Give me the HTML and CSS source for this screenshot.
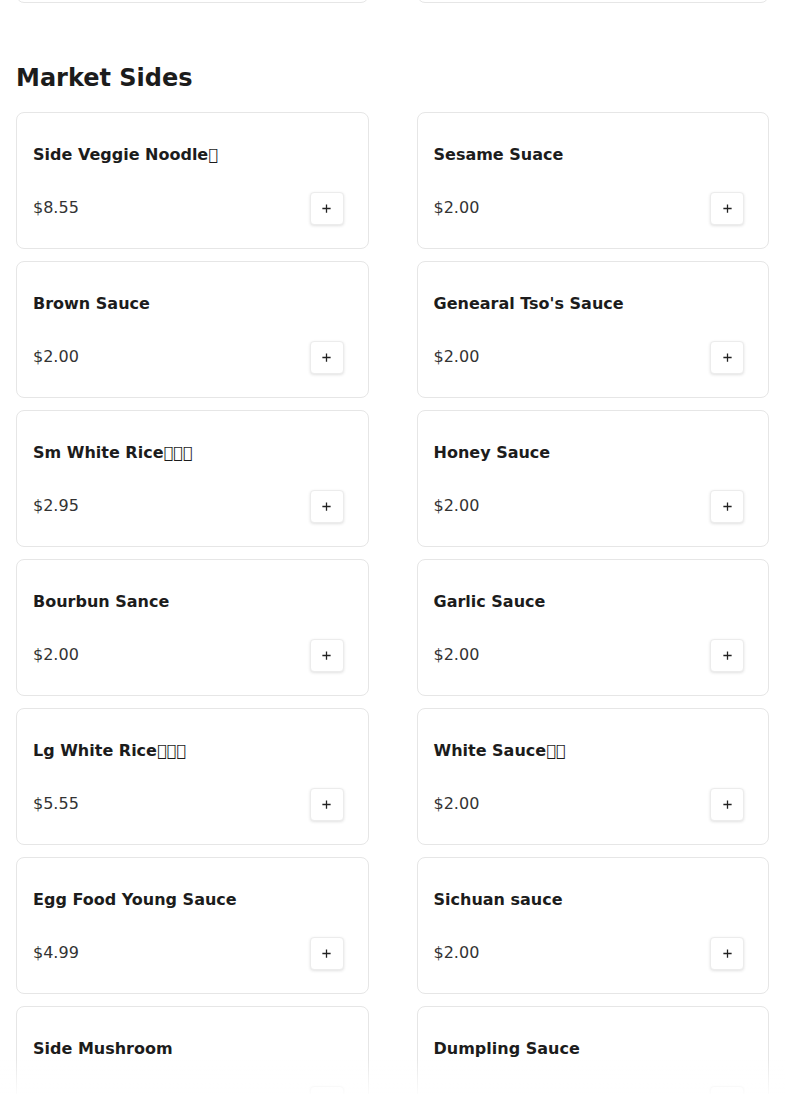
FILE: index.html
```html
<!DOCTYPE html>
<html lang="en">
<head>
<meta charset="utf-8">
<title>Market Sides</title>
<link rel="stylesheet" href="styles.css">
</head>
<body>
<main class="menu">
  <section class="section section-prev">
    <div class="grid">
      <div class="card card-empty"></div>
      <div class="card card-empty"></div>
    </div>
  </section>

  <section class="section">
    <h2 class="section-title">Market Sides</h2>
    <div class="grid">
      <div class="card"><h3 class="item-name">Side Veggie Noodle&#x10FFFD;</h3><div class="item-row"><span class="price">$8.55</span><button class="add" aria-label="Add"><svg viewBox="0 0 12 12" width="12" height="12"><path d="M6 1.5v9M1.5 6h9" stroke="#222" stroke-width="1.4" fill="none"/></svg></button></div></div>
      <div class="card"><h3 class="item-name">Sesame Suace</h3><div class="item-row"><span class="price">$2.00</span><button class="add" aria-label="Add"><svg viewBox="0 0 12 12" width="12" height="12"><path d="M6 1.5v9M1.5 6h9" stroke="#222" stroke-width="1.4" fill="none"/></svg></button></div></div>
      <div class="card"><h3 class="item-name">Brown Sauce</h3><div class="item-row"><span class="price">$2.00</span><button class="add" aria-label="Add"><svg viewBox="0 0 12 12" width="12" height="12"><path d="M6 1.5v9M1.5 6h9" stroke="#222" stroke-width="1.4" fill="none"/></svg></button></div></div>
      <div class="card"><h3 class="item-name">Genearal Tso's Sauce</h3><div class="item-row"><span class="price">$2.00</span><button class="add" aria-label="Add"><svg viewBox="0 0 12 12" width="12" height="12"><path d="M6 1.5v9M1.5 6h9" stroke="#222" stroke-width="1.4" fill="none"/></svg></button></div></div>
      <div class="card"><h3 class="item-name">Sm White Rice&#x10FFFD;&#x10FFFD;&#x10FFFD;</h3><div class="item-row"><span class="price">$2.95</span><button class="add" aria-label="Add"><svg viewBox="0 0 12 12" width="12" height="12"><path d="M6 1.5v9M1.5 6h9" stroke="#222" stroke-width="1.4" fill="none"/></svg></button></div></div>
      <div class="card"><h3 class="item-name">Honey Sauce</h3><div class="item-row"><span class="price">$2.00</span><button class="add" aria-label="Add"><svg viewBox="0 0 12 12" width="12" height="12"><path d="M6 1.5v9M1.5 6h9" stroke="#222" stroke-width="1.4" fill="none"/></svg></button></div></div>
      <div class="card"><h3 class="item-name">Bourbun Sance</h3><div class="item-row"><span class="price">$2.00</span><button class="add" aria-label="Add"><svg viewBox="0 0 12 12" width="12" height="12"><path d="M6 1.5v9M1.5 6h9" stroke="#222" stroke-width="1.4" fill="none"/></svg></button></div></div>
      <div class="card"><h3 class="item-name">Garlic Sauce</h3><div class="item-row"><span class="price">$2.00</span><button class="add" aria-label="Add"><svg viewBox="0 0 12 12" width="12" height="12"><path d="M6 1.5v9M1.5 6h9" stroke="#222" stroke-width="1.4" fill="none"/></svg></button></div></div>
      <div class="card"><h3 class="item-name">Lg White Rice&#x10FFFD;&#x10FFFD;&#x10FFFD;</h3><div class="item-row"><span class="price">$5.55</span><button class="add" aria-label="Add"><svg viewBox="0 0 12 12" width="12" height="12"><path d="M6 1.5v9M1.5 6h9" stroke="#222" stroke-width="1.4" fill="none"/></svg></button></div></div>
      <div class="card"><h3 class="item-name">White Sauce&#x10FFFD;&#x10FFFD;</h3><div class="item-row"><span class="price">$2.00</span><button class="add" aria-label="Add"><svg viewBox="0 0 12 12" width="12" height="12"><path d="M6 1.5v9M1.5 6h9" stroke="#222" stroke-width="1.4" fill="none"/></svg></button></div></div>
      <div class="card"><h3 class="item-name">Egg Food Young Sauce</h3><div class="item-row"><span class="price">$4.99</span><button class="add" aria-label="Add"><svg viewBox="0 0 12 12" width="12" height="12"><path d="M6 1.5v9M1.5 6h9" stroke="#222" stroke-width="1.4" fill="none"/></svg></button></div></div>
      <div class="card"><h3 class="item-name">Sichuan sauce</h3><div class="item-row"><span class="price">$2.00</span><button class="add" aria-label="Add"><svg viewBox="0 0 12 12" width="12" height="12"><path d="M6 1.5v9M1.5 6h9" stroke="#222" stroke-width="1.4" fill="none"/></svg></button></div></div>
      <div class="card"><h3 class="item-name">Side Mushroom</h3><div class="item-row"><span class="price">$4.99</span><button class="add" aria-label="Add"><svg viewBox="0 0 12 12" width="12" height="12"><path d="M6 1.5v9M1.5 6h9" stroke="#222" stroke-width="1.4" fill="none"/></svg></button></div></div>
      <div class="card"><h3 class="item-name">Dumpling Sauce</h3><div class="item-row"><span class="price">$2.00</span><button class="add" aria-label="Add"><svg viewBox="0 0 12 12" width="12" height="12"><path d="M6 1.5v9M1.5 6h9" stroke="#222" stroke-width="1.4" fill="none"/></svg></button></div></div>
    </div>
  </section>
</main>
<div class="fade"></div>
</body>
</html>
```

FILE: styles.css
```css
* { box-sizing: border-box; }
html, body { margin: 0; padding: 0; background: #fff; }
body {
  font-family: "DejaVu Sans", sans-serif;
  color: #1c1c1c;
  overflow: hidden;
}
.menu {
  padding: 0 16px;
  margin-top: -134px;
}
.section-title {
  font-size: 24px;
  font-weight: bold;
  line-height: 32px;
  margin: 59px 0 18px;
  color: #1c1c1c;
}
.grid {
  display: grid;
  grid-template-columns: 1fr 1fr;
  column-gap: 48px;
  row-gap: 12px;
}
.card {
  border: 1px solid #e6e6e6;
  border-radius: 8px;
  padding: 30px 24px 23px 16px;
  background: #fff;
  height: 137px;
}
.item-name {
  margin: 0;
  font-size: 16px;
  font-weight: bold;
  line-height: 24px;
  color: #1c1c1c;
}
.item-row {
  margin-top: 25px;
  display: flex;
  align-items: center;
  justify-content: space-between;
}
.price {
  font-size: 16px;
  color: #333;
  margin-top: -2px;
}
.add {
  width: 34px;
  height: 33px;
  border: 1px solid #ececec;
  border-radius: 4px;
  background: #fff;
  box-shadow: 0 1px 3px rgba(0,0,0,0.12);
  display: flex;
  align-items: center;
  justify-content: center;
  padding: 0;
}
.add svg { display: block; width: 11px; height: 11px; }
.fade {
  position: fixed;
  left: 0;
  right: 0;
  bottom: 0;
  height: 36px;
  background: linear-gradient(rgba(255,255,255,0), rgba(255,255,255,0.88));
  pointer-events: none;
}
```
